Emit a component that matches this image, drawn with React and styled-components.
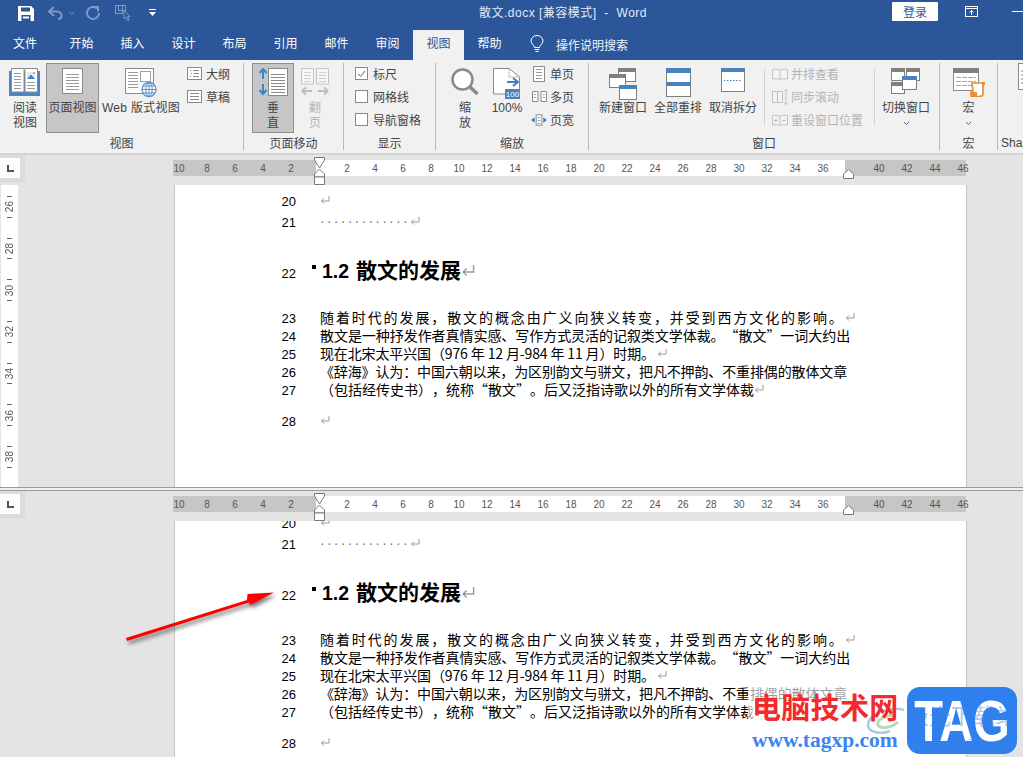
import React from 'react';
import styled, { createGlobalStyle } from 'styled-components';

const ui = '"Liberation Sans", "Noto Sans CJK SC", sans-serif';
const doc = '"Noto Sans CJK SC", "Liberation Sans", sans-serif';

const Global = createGlobalStyle`
  html, body { margin: 0; padding: 0; background: #e4e4e4; }
  * { box-sizing: border-box; }
`;

const Window = styled.div`
  position: relative;
  width: 1023px;
  height: 757px;
  overflow: hidden;
  font-family: ${ui};
  font-size: 12px;
  color: #444;
`;

/* title bar */
const TitleBar = styled.div`
  display: flex;
  align-items: center;
  height: 30px;
  padding-bottom: 4px;
  background: #2b579a;
  color: #e3e9f3;
`;
const Qat = styled.div`
  display: flex;
  flex: none;
  align-items: center;
  width: 479px;
  padding-left: 18px;
`;
const QatItem = styled.span`
  display: flex;
  margin-left: ${p => p.$gap || 0}px;
`;
const Title = styled.div`
  flex: none;
  width: 168px;
  margin-top: -3px;
  white-space: pre;
  font-size: 12px;
  letter-spacing: 0.5px;
`;
const Login = styled.button`
  flex: none;
  width: 46px;
  height: 19px;
  margin-left: 245px;
  margin-top: -3px;
  padding: 0;
  border: 0;
  border-radius: 1px;
  background: #fff;
  color: #2b579a;
  font: 12px ${ui};
`;
const WinIcon = styled.span`
  display: flex;
  flex: none;
  margin-left: ${p => p.$gap}px;
  margin-top: -4px;
`;

/* tabs */
const TabBar = styled.div`
  display: flex;
  align-items: stretch;
  height: 30px;
  background: #2b579a;
`;
const Tab = styled.div`
  width: ${p => p.$w || 51}px;
  padding-left: ${p => p.$pad || 0}px;
  text-align: ${p => (p.$pad ? 'left' : 'center')};
  line-height: 28px;
  color: ${p => (p.$on ? '#2b579a' : '#fff')};
  background: ${p => (p.$on ? '#f1f1f1' : 'transparent')};
`;
const TellMe = styled.div`
  display: flex;
  align-items: center;
  gap: 12px;
  margin-left: 15px;
  height: 28px;
  color: #eef2f8;
`;

/* ribbon */
const Ribbon = styled.div`
  display: flex;
  height: 95px;
  padding-top: 3px;
  background: #f1f1f1;
  border-bottom: 2px solid #d4d4d4;
  overflow: hidden;
`;
const Group = styled.div`
  display: flex;
  flex-direction: column;
  flex: none;
  width: ${p => p.$w}px;
  height: 87px;
  border-right: ${p => (p.$last ? '0' : '1px solid #b9b9b9')};
`;
const GroupBody = styled.div`
  display: flex;
  flex: none;
  height: 70px;
  padding-left: ${p => p.$pad || 0}px;
`;
const GroupLabel = styled.div`
  text-align: ${p => (p.$left ? 'left' : 'center')};
  padding-left: ${p => (p.$left ? 3 : 0)}px;
  padding-top: ${p => (p.$left ? 0 : 1)}px;
  line-height: 20px;
  white-space: nowrap;
`;
const BigButton = styled.div`
  display: flex;
  flex-direction: column;
  align-items: center;
  flex: none;
  width: ${p => p.$w}px;
  height: 70px;
  margin-left: ${p => p.$gap || 0}px;
  padding-top: ${p => (p.$on ? 4 : 5)}px;
  color: ${p => (p.$off ? '#b4b4b4' : '#444')};
  background: ${p => (p.$on ? '#c6c6c6' : 'transparent')};
  border: ${p => (p.$on ? '1px solid #8f8f8f' : '0')};
  line-height: 15px;
  letter-spacing: ${p => p.$track || 0}px;
  text-align: center;
  white-space: nowrap;
`;
const BigIcon = styled.div`
  display: flex;
  flex: none;
  justify-content: center;
  height: 33px;
`;
const Chevron = styled.span`
  display: flex;
  margin-top: 5px;
`;
const SmallList = styled.div`
  display: flex;
  flex-direction: column;
  flex: none;
  width: ${p => (p.$w ? `${p.$w}px` : 'auto')};
  margin-top: -1px;
  margin-left: ${p => p.$gap || 0}px;
`;
const SmallRow = styled.div`
  display: flex;
  align-items: center;
  gap: ${p => p.$g || 3}px;
  height: 23px;
  white-space: nowrap;
  color: ${p => (p.$off ? '#b4b4b4' : '#444')};
`;
const SmallIcon = styled.span`
  display: flex;
  justify-content: center;
  width: 16px;
`;
const Check = styled.span`
  display: flex;
  align-items: center;
  justify-content: center;
  width: 13px;
  height: 13px;
  background: #fff;
  border: 1px solid #8a8a8a;
`;
const InnerRule = styled.div`
  flex: none;
  width: 1px;
  height: 56px;
  margin: 6px 0 0 ${p => p.$gap}px;
  background: #d0d0d0;
`;

/* panes */
const Pane = styled.div`
  display: flex;
  flex-direction: column;
  height: ${p => p.$h}px;
  background: #e4e4e4;
`;
const RulerRow = styled.div`
  display: flex;
  flex: none;
  height: 30px;
`;
const Corner = styled.div`
  flex: none;
  display: flex;
  width: 25px;
  height: 27px;
  padding-top: 3px;
  background: #dcdcdc;
`;
const CornerFace = styled.div`
  display: flex;
  align-items: center;
  justify-content: center;
  width: 20px;
  height: 20px;
  background: #fdfdfd;
`;
const RulerBar = styled.div`
  position: relative;
  display: flex;
  width: 793px;
  height: 16px;
  margin: 5px 0 0 148px;
  font-size: 10px;
  color: #555;
`;
const RulerPart = styled.div`
  display: flex;
  flex: none;
  align-items: center;
  justify-content: ${p => (p.$end ? 'flex-end' : 'flex-start')};
  width: ${p => p.$w}px;
  padding-left: ${p => p.$l || 0}px;
  padding-right: ${p => p.$r || 0}px;
  background: ${p => (p.$dark ? '#c6c6c6' : '#fff')};
`;
const Tick = styled.span`
  flex: none;
  width: 28px;
  text-align: center;
`;
const Marker = styled.svg`
  position: absolute;
  left: ${p => p.$x}px;
  top: ${p => p.$y}px;
`;
const PaneBody = styled.div`
  display: flex;
  flex: 1;
  min-height: 0;
`;
const Gutter = styled.div`
  flex: none;
  width: 174px;
  padding-left: 1px;
`;
const VRuler = styled.div`
  display: flex;
  flex-direction: column;
  width: 17px;
  height: 100%;
  padding-top: 1px;
  background: #fff;
  overflow: hidden;
`;
const VCell = styled.div`
  display: flex;
  flex: none;
  flex-direction: column;
  align-items: center;
  justify-content: space-between;
  height: 41.7px;
  padding: 10px 0;
  font-size: 10px;
  color: #555;
`;
const VTick = styled.i`
  width: 5px;
  height: 1px;
  background: #666;
`;
const VNum = styled.span`
  writing-mode: vertical-rl;
  transform: rotate(180deg);
  line-height: 10px;
`;
const Page = styled.div`
  flex: none;
  width: 793px;
  background: #fff;
  border-left: 1px solid #c4c4c4;
  border-right: 1px solid #c4c4c4;
  overflow: hidden;
`;
const Lines = styled.div`
  margin-top: ${p => p.$top}px;
`;
const Line = styled.div`
  display: flex;
  align-items: center;
  height: ${p => p.$h || 18}px;
  margin-top: ${p => p.$before || 0}px;
  color: #000;
`;
const LineNo = styled.span`
  flex: none;
  width: 121px;
  text-align: right;
  font: 13px ${ui};
`;
const LineText = styled.div`
  position: relative;
  display: flex;
  align-items: ${p => (p.$head ? 'baseline' : 'center')};
  margin-left: 24px;
  margin-top: ${p => (p.$head ? -4 : -2)}px;
  white-space: nowrap;
  font: ${p => (p.$head ? '700 21px' : '14px')} / 18px ${doc};
  letter-spacing: ${p => p.$spread || 0}px;
  text-spacing-trim: space-all;
`;
const HeadNum = styled.span`
  font: 700 19.5px ${ui};
  margin: 0 7px 0 2px;
`;
const Bullet = styled.i`
  position: absolute;
  left: -8px;
  top: 5px;
  width: 4px;
  height: 4px;
  background: #000;
`;
const Dots = styled.span`
  font: 14px ${ui};
  letter-spacing: 2.25px;
  color: #777;
`;
const Mark = styled.svg`
  flex: none;
  margin-left: ${p => p.$gap || 0}px;
`;
const Splitter = styled.div`
  height: 4px;
  background: #f0f0f0;
  border-top: 1px solid #9a9a9a;
  border-bottom: 1px solid #9a9a9a;
`;

/* things lying over the page */
const Arrow = styled.svg`
  position: absolute;
  left: 120px;
  top: 585px;
  filter: drop-shadow(2px 3px 2px rgba(0, 0, 0, 0.55));
`;
const Fade = styled.div`
  position: absolute;
  left: 748px;
  top: 684px;
  width: 150px;
  height: 50px;
  background: rgba(255, 255, 255, 0.62);
`;
const SiteName = styled.div`
  position: absolute;
  left: 752px;
  top: 689px;
  font: 700 29px/34px ${doc};
  letter-spacing: 0.3px;
  color: #f5292c;
`;
const SiteUrl = styled.div`
  position: absolute;
  left: 752px;
  top: 729px;
  font: 700 21.5px/22px "Liberation Serif", serif;
  color: #3a85ee;
`;
const Swirl = styled.svg`
  position: absolute;
  left: 866px;
  top: 706px;
`;
const Badge = styled.div`
  position: absolute;
  left: 907px;
  top: 687px;
  width: 110px;
  height: 67px;
  border-radius: 13px;
  background: #2e80ee;
  color: #fff;
  text-align: center;
  font: 700 47px/67px ${ui};
`;
const BadgeText = styled.span`
  display: block;
  transform: scaleY(1.24);
`;
const BadgeGhost = styled.div`
  position: absolute;
  left: 907px;
  top: ${p => p.$y}px;
  width: 110px;
  text-align: center;
  font: ${p => p.$size}px/20px ${doc};
  color: rgba(70, 130, 220, 0.45);
`;

/* icons */
const SaveIcon = () => (
  <svg width="16" height="15" viewBox="0 0 16 15">
    <path d="M0 0H13L16 3V15H0Z" fill="#fff" />
    <rect x="3" y="1.5" width="9" height="4" fill="#2b579a" />
    <rect x="3.5" y="9" width="9" height="6" fill="#2b579a" />
    <rect x="5" y="10.5" width="6" height="2" fill="#fff" />
  </svg>
);
const UndoIcon = () => (
  <svg width="16" height="14" viewBox="0 0 16 14" fill="none" stroke="#7d99c6" strokeWidth="2">
    <path d="M7 1 2 5.5 7 10" />
    <path d="M2 5.5H10C13 5.5 14.5 7.5 14.5 9.5S13 13 11 13" />
  </svg>
);
const RedoIcon = () => (
  <svg width="14" height="14" viewBox="0 0 14 14" fill="none" stroke="#7d99c6" strokeWidth="2">
    <path d="M11 2.5A6 6 0 1 0 13 7" />
    <path d="M7.5 1H12V5.5" />
  </svg>
);
const TouchIcon = () => (
  <svg width="17" height="16" viewBox="0 0 17 16" fill="none" stroke="#7d99c6">
    <rect x="0.5" y="0.5" width="7" height="8" />
    <rect x="3.5" y="0.5" width="7" height="5" />
    <path d="M9 5V14L11 12 12.5 15.5 14 15 12.5 11.5H15Z" fill="#2b579a" />
  </svg>
);
const TinyChevron = ({ color = '#7d99c6' }) => (
  <svg width="7" height="5" viewBox="0 0 7 5" fill="none" stroke={color}>
    <path d="M1 1 3.5 3.5 6 1" />
  </svg>
);
const CustomizeIcon = () => (
  <svg width="7" height="8" viewBox="0 0 7 8">
    <rect y="0" width="7" height="1" fill="#fff" />
    <path d="M0 3H7L3.5 7Z" fill="#fff" />
  </svg>
);
const RestoreIcon = () => (
  <svg width="13" height="11" viewBox="0 0 13 11" fill="none" stroke="#fff">
    <rect x="0.5" y="0.5" width="12" height="10" />
    <path d="M0 2.5H13M6.5 9V4.5M4.5 6.5 6.5 4.5 8.5 6.5" />
  </svg>
);
const MinIcon = () => (
  <svg width="11" height="1" viewBox="0 0 11 1"><rect width="11" height="1" fill="#fff" /></svg>
);
const BulbIcon = () => (
  <svg width="14" height="18" viewBox="0 0 14 18" fill="none" stroke="#fff">
    <path d="M4.5 12.5C4.5 10 1 9 1 6A6 5.5 0 0 1 13 6C13 9 9.5 10 9.5 12.5Z" />
    <path d="M4.5 14.5H9.5M5.5 16.5H8.5" />
  </svg>
);

const TextLines = ({ x, y, w, n, step = 3, color = '#9a9a9a' }) => (
  <path
    d={Array.from({ length: n }, (_, i) => `M${x} ${y + i * step + 0.5}h${w}`).join('')}
    stroke={color}
    fill="none"
  />
);

const ReadIcon = () => (
  <svg width="32" height="28" viewBox="0 0 32 28">
    <path d="M0 3H31V28H0Z" fill="#4a86c4" />
    <path d="M2.5.5H15V24H2.5ZM16 .5H28.5V24H16Z" fill="#fff" stroke="#8a8a8a" />
    <TextLines x={5} y={5} w={7} n={6} />
    <TextLines x={18} y={14} w={8} n={3} />
    <path d="M18 4H26V11H18Z" fill="#dfe9f4" />
    <path d="M18 11 22 6.5 26 11Z" fill="#3f7fbf" />
    <rect x="24" y="4" width="2" height="2" fill="#eda64f" />
  </svg>
);
const PageIcon = () => (
  <svg width="22" height="27" viewBox="0 0 22 27">
    <rect x="0.5" y="0.5" width="20" height="25" fill="#fff" stroke="#8a8a8a" />
    <TextLines x={4} y={6} w={13} n={6} />
  </svg>
);
const WebIcon = () => (
  <svg width="32" height="30" viewBox="0 0 32 30">
    <rect x="0.5" y="0.5" width="28" height="25" fill="#fff" stroke="#8a8a8a" />
    <TextLines x={3} y={4} w={10} n={6} />
    <rect x="15.5" y="3.5" width="10" height="10" fill="#fff" stroke="#a0a0a0" />
    <circle cx="24" cy="21.5" r="7" fill="#fff" stroke="#5b90cc" strokeWidth="1.3" />
    <path d="M17 21.5H31M18 18H30M18 25H30M24 14.5V28.5" stroke="#5b90cc" fill="none" />
    <ellipse cx="24" cy="21.5" rx="3.2" ry="7" fill="none" stroke="#5b90cc" />
  </svg>
);
const OutlineIcon = () => (
  <svg width="15" height="13" viewBox="0 0 15 13">
    <rect x="0.5" y="0.5" width="14" height="12" fill="#fff" stroke="#8a8a8a" />
    <path d="M3 3.5h1M6 3.5h6M4 6.5h1M7 6.5h5M3 9.5h1M6 9.5h6" stroke="#8a8a8a" />
  </svg>
);
const DraftIcon = () => (
  <svg width="15" height="13" viewBox="0 0 15 13">
    <rect x="0.5" y="0.5" width="14" height="12" fill="#fff" stroke="#8a8a8a" />
    <TextLines x={3} y={3} w={9} n={3} color="#8a8a8a" />
  </svg>
);
const VerticalIcon = () => (
  <svg width="30" height="28" viewBox="0 0 30 28">
    <path d="M5 1V11M1.5 5 5 1 8.5 5M5 16V26M1.5 22 5 26 8.5 22" fill="none" stroke="#3f86c6" strokeWidth="2" />
    <rect x="10.5" y="0.5" width="19" height="27" fill="#fff" stroke="#8a8a8a" />
    <TextLines x={13} y={6} w={14} n={7} color="#8a8a8a" />
  </svg>
);
const SideIcon = () => (
  <svg width="28" height="28" viewBox="0 0 28 28">
    <path d="M.5.5H12.5V16H.5ZM15.5.5H27.5V16H15.5Z" fill="#f7f7f7" stroke="#c4c4c4" />
    <TextLines x={3} y={4} w={7} n={4} color="#cfcfcf" />
    <TextLines x={18} y={4} w={7} n={4} color="#cfcfcf" />
    <path d="M1 23H11M1 23 5 19.5M1 23 5 26.5M17 23H27M27 23 23 19.5M27 23 23 26.5" fill="none" stroke="#bdbdbd" strokeWidth="2" />
  </svg>
);
const MagnifierIcon = () => (
  <svg width="28" height="28" viewBox="0 0 28 28" fill="none">
    <circle cx="11.5" cy="11.5" r="10" fill="#fff" stroke="#8a8a8a" strokeWidth="2.5" />
    <path d="M18.5 18.5 26.5 26" stroke="#8a8a8a" strokeWidth="3.5" />
  </svg>
);
const HundredIcon = () => (
  <svg width="28" height="32" viewBox="0 0 28 32">
    <path d="M.5.5H16L26.5 9V26H.5Z" fill="#fff" stroke="#8a8a8a" />
    <path d="M16 .5V9H26.5" fill="none" stroke="#a0a0a0" strokeDasharray="2 1" />
    <path d="M14 14H24M20 10 25 14 20 18" fill="none" stroke="#3f7fbf" strokeWidth="2" />
    <rect x="12" y="21" width="15" height="10" fill="#4a82bd" />
    <text x="19.5" y="29" textAnchor="middle" fontSize="8" fill="#fff" fontFamily="Liberation Sans">100</text>
  </svg>
);
const OnePageIcon = () => (
  <svg width="12" height="16" viewBox="0 0 12 16">
    <rect x="0.5" y="0.5" width="11" height="15" fill="#fff" stroke="#8a8a8a" />
    <TextLines x={3} y={3} w={6} n={4} />
  </svg>
);
const MultiPageIcon = () => (
  <svg width="15" height="11" viewBox="0 0 15 11">
    <path d="M.5.5H6V10.5H.5ZM9 .5H14.5V10.5H9Z" fill="#fff" stroke="#8a8a8a" />
    <TextLines x={2} y={3} w={2} n={2} />
    <TextLines x={11} y={3} w={2} n={2} />
  </svg>
);
const PageWidthIcon = () => (
  <svg width="17" height="12" viewBox="0 0 17 12">
    <rect x="5.5" y="0.5" width="6" height="11" fill="#fff" stroke="#8a8a8a" />
    <path d="M0 6 4 3V9ZM17 6 13 3V9Z" fill="#3f7fbf" />
    <TextLines x={7} y={3} w={3} n={3} />
  </svg>
);
const Win = ({ x, y, w, h, bar = '#7f7f7f', fill = '#fff' }) => (
  <g>
    <rect x={x + 0.5} y={y + 0.5} width={w} height={h} fill={fill} stroke="#7f7f7f" />
    <rect x={x} y={y} width={w + 1} height="4" fill={bar} />
  </g>
);
const NewWinIcon = () => (
  <svg width="28" height="32" viewBox="0 0 28 32">
    <Win x={9} y={0} w={17} h={13} />
    <Win x={0} y={6} w={16} h={13} />
    <Win x={10} y={17} w={17} h={14} bar="#4a82bd" />
  </svg>
);
const ArrangeIcon = () => (
  <svg width="25" height="30" viewBox="0 0 25 30">
    <rect x="0.5" y="0.5" width="24" height="28" fill="#fff" stroke="#7f7f7f" />
    <rect width="25" height="5" fill="#4a82bd" />
    <rect y="14" width="25" height="4" fill="#4a82bd" />
  </svg>
);
const SplitIcon = () => (
  <svg width="24" height="24" viewBox="0 0 24 24">
    <rect x="0.5" y="0.5" width="23" height="23" fill="#fff" stroke="#7f7f7f" />
    <rect width="24" height="4" fill="#4a82bd" />
    <path d="M3 12.5H21" stroke="#4a82bd" strokeDasharray="1.5 1.5" />
  </svg>
);
const SideBySideIcon = () => (
  <svg width="16" height="12" viewBox="0 0 16 12" fill="#f3f3f3" stroke="#c2c2c2">
    <path d="M8 2.5C6 1 3 1 .5 1.5V11C3 10.5 6 10.5 8 11.5 10 10.5 13 10.5 15.5 11V1.5C13 1 10 1 8 2.5ZM8 2.5V11.5" />
  </svg>
);
const SyncIcon = () => (
  <svg width="16" height="16" viewBox="0 0 16 16" fill="none" stroke="#c2c2c2">
    <path d="M.5 2.5H5.5V13.5H.5ZM5.5 2.5H10.5V13.5H5.5Z" fill="#f3f3f3" />
    <path d="M14 0V16M12.5 2 14 .5 15.5 2M12.5 14 14 15.5 15.5 14" />
  </svg>
);
const ResetIcon = () => (
  <svg width="16" height="12" viewBox="0 0 16 12" fill="#f3f3f3" stroke="#c2c2c2">
    <path d="M8 2.5C6 1 3 1 .5 1.5V11C3 10.5 6 10.5 8 11.5 10 10.5 13 10.5 15.5 11V1.5C13 1 10 1 8 2.5ZM8 2.5V11.5" />
    <path d="M2 6.5H6M4 4.5V8.5M10 6.5H14" fill="none" />
  </svg>
);
const SwitchIcon = () => (
  <svg width="30" height="26" viewBox="0 0 30 26">
    <Win x={0} y={0} w={13} h={12} />
    <Win x={15} y={0} w={13} h={12} />
    <Win x={0} y={14} w={13} h={11} />
    <Win x={11} y={8} w={14} h={13} bar="#4a82bd" />
  </svg>
);
const MacroIcon = () => (
  <svg width="32" height="29" viewBox="0 0 32 29">
    <rect x="0.5" y="0.5" width="25" height="22" fill="#fff" stroke="#8a8a8a" />
    <rect width="26" height="5" fill="#7f7f7f" />
    <path d="M3 9.5H23M3 13.5H23M3 17.5H23" stroke="#a8a8a8" strokeDasharray="5 1" />
    <path d="M19 15H30V26C30 28 28 28.5 26 28.5H18V24H20Z" fill="#fff" stroke="#e88f38" strokeWidth="1.7" />
    <path d="M18 24H24V28.5H18Z" fill="#e88f38" />
    <rect x="29" y="14" width="3" height="3" fill="#e88f38" />
  </svg>
);
const ShareIcon = () => (
  <svg width="12" height="27" viewBox="0 0 12 27">
    <rect x="0.5" y="0.5" width="20" height="26" fill="#fff" stroke="#8a8a8a" />
    <path d="M3 8h6M3 12h5M3 16h6M3 20h4" stroke="#8a8a8a" />
  </svg>
);
const ReturnMark = ({ gap, size = 1 }) => (
  <Mark $gap={gap} width={10 * size} height={9 * size} viewBox="0 0 10 9" fill="none" stroke="#9a9a9a">
    <path d="M9 0V5H1.5M4 2.5 1.5 5 4 7.5" />
  </Mark>
);

const chips = v => v.map(n => <Tick key={n}>{n}</Tick>);
const innerTicks = Array.from({ length: 18 }, (_, i) => (i + 1) * 2);

const HRuler = () => (
  <RulerRow>
    <Corner>
      <CornerFace>
        <svg width="7" height="7" viewBox="0 0 7 7"><path d="M0 0H2V5H7V7H0Z" fill="#555" /></svg>
      </CornerFace>
    </Corner>
    <RulerBar>
      <RulerPart $dark $end $w={143} $r={11}>{chips([10, 8, 6, 4, 2])}</RulerPart>
      <RulerPart $w={529} $l={17}>{chips(innerTicks)}</RulerPart>
      <RulerPart $dark $w={121} $l={20}>{chips([40, 42, 44, 46])}</RulerPart>
      <Marker $x={141} $y={-3} width="11" height="28" viewBox="0 0 11 28" fill="#fff" stroke="#7a7a7a">
        <path d="M.5.5H10.5V3L5.5 11 .5 3Z" />
        <path d="M5.5 12 10.5 17V20H.5V17Z" />
        <path d="M.5 20H10.5V27.5H.5Z" />
      </Marker>
      <Marker $x={670} $y={9} width="11" height="10" viewBox="0 0 11 10" fill="#fff" stroke="#7a7a7a">
        <path d="M5.5.5 10.5 5V9.5H.5V5Z" />
      </Marker>
    </RulerBar>
  </RulerRow>
);

const vNumbers = [26, 28, 30, 32, 34, 36, 38, 40];

const Document = ({ top }) => (
  <Lines $top={top}>
    <Line>
      <LineNo>20</LineNo>
      <LineText><ReturnMark /></LineText>
    </Line>
    <Line $before={3}>
      <LineNo>21</LineNo>
      <LineText><Dots>·············</Dots><ReturnMark /></LineText>
    </Line>
    <Line $before={30} $h={24}>
      <LineNo>22</LineNo>
      <LineText $head>
        <Bullet />
        <HeadNum>1.2</HeadNum>散文的发展<ReturnMark size={1.4} />
      </LineText>
    </Line>
    <Line $before={24}>
      <LineNo>23</LineNo>
      <LineText $spread={1.9}>随着时代的发展，散文的概念由广义向狭义转变，并受到西方文化的影响。<ReturnMark /></LineText>
    </Line>
    <Line>
      <LineNo>24</LineNo>
      <LineText $spread={-0.05}>散文是一种抒发作者真情实感、写作方式灵活的记叙类文学体裁。“散文”一词大约出</LineText>
    </Line>
    <Line>
      <LineNo>25</LineNo>
      <LineText $spread={-0.13}>现在北宋太平兴国（976 年 12 月-984 年 11 月）时期。<ReturnMark gap={2} /></LineText>
    </Line>
    <Line>
      <LineNo>26</LineNo>
      <LineText $spread={-0.13}>《辞海》认为：中国六朝以来，为区别韵文与骈文，把凡不押韵、不重排偶的散体文章</LineText>
    </Line>
    <Line>
      <LineNo>27</LineNo>
      <LineText>（包括经传史书），统称“散文”。后又泛指诗歌以外的所有文学体裁<ReturnMark /></LineText>
    </Line>
    <Line $before={13}>
      <LineNo>28</LineNo>
      <LineText><ReturnMark /></LineText>
    </Line>
  </Lines>
);

const App = () => (
  <Window>
    <Global />
    <TitleBar>
      <Qat>
        <QatItem><SaveIcon /></QatItem>
        <QatItem $gap={13}><UndoIcon /></QatItem>
        <QatItem $gap={5}><TinyChevron /></QatItem>
        <QatItem $gap={11}><RedoIcon /></QatItem>
        <QatItem $gap={15}><TouchIcon /></QatItem>
        <QatItem $gap={17}><CustomizeIcon /></QatItem>
      </Qat>
      <Title>散文.docx [兼容模式]  -  Word</Title>
      <Login>登录</Login>
      <WinIcon $gap={27}><RestoreIcon /></WinIcon>
      <WinIcon $gap={34}><MinIcon /></WinIcon>
    </TitleBar>

    <TabBar>
      <Tab $w={56} $pad={13}>文件</Tab>
      {['开始', '插入', '设计', '布局', '引用', '邮件', '审阅'].map(t => <Tab key={t}>{t}</Tab>)}
      <Tab $on>视图</Tab>
      <Tab>帮助</Tab>
      <TellMe><BulbIcon />操作说明搜索</TellMe>
    </TabBar>

    <Ribbon>
      <Group $w={244}>
        <GroupBody $pad={5}>
          <BigButton $w={40}><BigIcon><ReadIcon /></BigIcon>阅读<br />视图</BigButton>
          <BigButton $on $w={53} $gap={1}><BigIcon><PageIcon /></BigIcon>页面视图</BigButton>
          <BigButton $w={80} $gap={2} $track={0.3}><BigIcon><WebIcon /></BigIcon>Web 版式视图</BigButton>
          <SmallList $gap={5}>
            <SmallRow $g={4}><SmallIcon><OutlineIcon /></SmallIcon>大纲</SmallRow>
            <SmallRow $g={4}><SmallIcon><DraftIcon /></SmallIcon>草稿</SmallRow>
          </SmallList>
        </GroupBody>
        <GroupLabel>视图</GroupLabel>
      </Group>

      <Group $w={100}>
        <GroupBody $pad={8}>
          <BigButton $on $w={42}><BigIcon><VerticalIcon /></BigIcon>垂<br />直</BigButton>
          <BigButton $off $w={30} $gap={6}><BigIcon><SideIcon /></BigIcon>翻<br />页</BigButton>
        </GroupBody>
        <GroupLabel>页面移动</GroupLabel>
      </Group>

      <Group $w={92}>
        <GroupBody $pad={11}>
          <SmallList>
            <SmallRow $g={5}>
              <Check>
                <svg width="9" height="8" viewBox="0 0 9 8" fill="none" stroke="#666"><path d="M1 4 3.5 6.5 8 1" /></svg>
              </Check>
              标尺
            </SmallRow>
            <SmallRow $g={5}><Check />网格线</SmallRow>
            <SmallRow $g={5}><Check />导航窗格</SmallRow>
          </SmallList>
        </GroupBody>
        <GroupLabel>显示</GroupLabel>
      </Group>

      <Group $w={153}>
        <GroupBody $pad={9}>
          <BigButton $w={40}><BigIcon><MagnifierIcon /></BigIcon>缩<br />放</BigButton>
          <BigButton $w={40} $gap={2}><BigIcon><HundredIcon /></BigIcon>100%</BigButton>
          <SmallList $gap={4}>
            <SmallRow><SmallIcon><OnePageIcon /></SmallIcon>单页</SmallRow>
            <SmallRow><SmallIcon><MultiPageIcon /></SmallIcon>多页</SmallRow>
            <SmallRow><SmallIcon><PageWidthIcon /></SmallIcon>页宽</SmallRow>
          </SmallList>
        </GroupBody>
        <GroupLabel>缩放</GroupLabel>
      </Group>

      <Group $w={351}>
        <GroupBody $pad={10}>
          <BigButton $w={48}><BigIcon><NewWinIcon /></BigIcon>新建窗口</BigButton>
          <BigButton $w={48} $gap={7}><BigIcon><ArrangeIcon /></BigIcon>全部重排</BigButton>
          <BigButton $w={48} $gap={7}><BigIcon><SplitIcon /></BigIcon>取消拆分</BigButton>
          <InnerRule $gap={7} />
          <SmallList $gap={7} $w={102}>
            <SmallRow $off><SmallIcon><SideBySideIcon /></SmallIcon>并排查看</SmallRow>
            <SmallRow $off><SmallIcon><SyncIcon /></SmallIcon>同步滚动</SmallRow>
            <SmallRow $off><SmallIcon><ResetIcon /></SmallIcon>重设窗口位置</SmallRow>
          </SmallList>
          <InnerRule $gap={0} />
          <BigButton $w={48} $gap={7}>
            <BigIcon><SwitchIcon /></BigIcon>切换窗口<Chevron><TinyChevron color="#666" /></Chevron>
          </BigButton>
        </GroupBody>
        <GroupLabel>窗口</GroupLabel>
      </Group>

      <Group $w={58}>
        <GroupBody>
          <BigButton $w={57}><BigIcon><MacroIcon /></BigIcon>宏<Chevron><TinyChevron color="#666" /></Chevron></BigButton>
        </GroupBody>
        <GroupLabel>宏</GroupLabel>
      </Group>

      <Group $w={26} $last>
        <GroupBody $pad={20}>
          <BigIcon><ShareIcon /></BigIcon>
        </GroupBody>
        <GroupLabel $left>Sha</GroupLabel>
      </Group>
    </Ribbon>

    <Pane $h={332}>
      <HRuler />
      <PaneBody>
        <Gutter>
          <VRuler>
            {vNumbers.map(n => (
              <VCell key={n}><VTick /><VNum>{n}</VNum><VTick /></VCell>
            ))}
          </VRuler>
        </Gutter>
        <Page><Document top={7} /></Page>
      </PaneBody>
    </Pane>
    <Splitter />
    <Pane $h={266}>
      <HRuler />
      <PaneBody>
        <Gutter />
        <Page><Document top={-7} /></Page>
      </PaneBody>
    </Pane>

    <Arrow width="160" height="60" viewBox="0 0 160 60">
      <path d="M6 53 127 15 127.5 9 154 7.5 130 20 129 17.5 7 56Z" fill="#f00" />
    </Arrow>
    <Fade />
    <Swirl width="40" height="30" viewBox="0 0 40 30" fill="none">
      <path d="M38 4C22 0 4 8 2 18 1 26 14 29 24 25" stroke="#a9cbe8" strokeWidth="2.5" />
      <path d="M30 10C20 8 10 14 12 19 14 23 26 22 32 16" stroke="#b7dcb5" strokeWidth="3" />
    </Swirl>
    <SiteName>电脑技术网</SiteName>
    <SiteUrl>www.tagxp.com</SiteUrl>
    <Badge><BadgeText>TAG</BadgeText></Badge>
    <BadgeGhost $y={704} $size={22}>极光下载站</BadgeGhost>
    <BadgeGhost $y={734} $size={16}>www.xz7.com</BadgeGhost>
  </Window>
);

export default App;
